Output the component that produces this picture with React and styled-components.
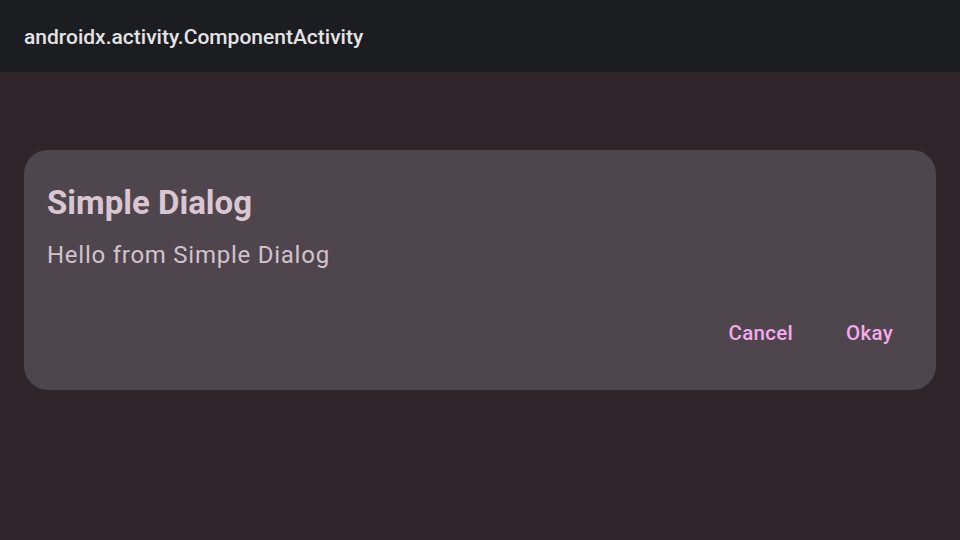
import React from 'react';
import styled, { createGlobalStyle } from 'styled-components';

const GlobalStyle = createGlobalStyle`
    html, body {
        margin: 0;
        padding: 0;
        background: #2f252b;
        font-family: Roboto, "Noto Sans", sans-serif;
    }
`;

const Screen = styled.div`
    width: 960px;
    height: 540px;
    display: flex;
    flex-direction: column;
    background: #2f252b;
`;

const TopBar = styled.header`
    height: 72px;
    flex-shrink: 0;
    display: flex;
    align-items: center;
    padding: 2px 24px 0;
    box-sizing: border-box;
    background: #1b1d20;
    color: #e3e3e6;
    font-size: 21px;
    font-weight: 500;
`;

const Body = styled.main`
    flex: 1;
    padding: 78px 24px 0;
`;

const Dialog = styled.section`
    height: 240px;
    box-sizing: border-box;
    background: #4f464d;
    border-radius: 24px;
    padding: 33px 23px 0;
    display: flex;
    flex-direction: column;
`;

const Title = styled.h2`
    margin: 0;
    font-size: 33px;
    font-weight: 700;
    color: #dac6d1;
    line-height: 40px;
`;

const Message = styled.p`
    margin: 16px 0 0;
    font-size: 24px;
    letter-spacing: 0.75px;
    color: #d3c2cc;
    line-height: 32px;
`;

const Actions = styled.div`
    display: flex;
    justify-content: flex-end;
    gap: 13px;
    margin-top: 42px;
`;

const TextButton = styled.button`
    background: none;
    border: none;
    padding: 8px 20px;
    font-family: inherit;
    font-size: 20.5px;
    font-weight: 500;
    letter-spacing: 0.3px;
    color: #f4aaec;
    cursor: pointer;
`;

export default function App() {
    return (
        <Screen>
            <GlobalStyle />
            <TopBar>androidx.activity.ComponentActivity</TopBar>
            <Body>
                <Dialog>
                    <Title>Simple Dialog</Title>
                    <Message>Hello from Simple Dialog</Message>
                    <Actions>
                        <TextButton>Cancel</TextButton>
                        <TextButton>Okay</TextButton>
                    </Actions>
                </Dialog>
            </Body>
        </Screen>
    );
}
